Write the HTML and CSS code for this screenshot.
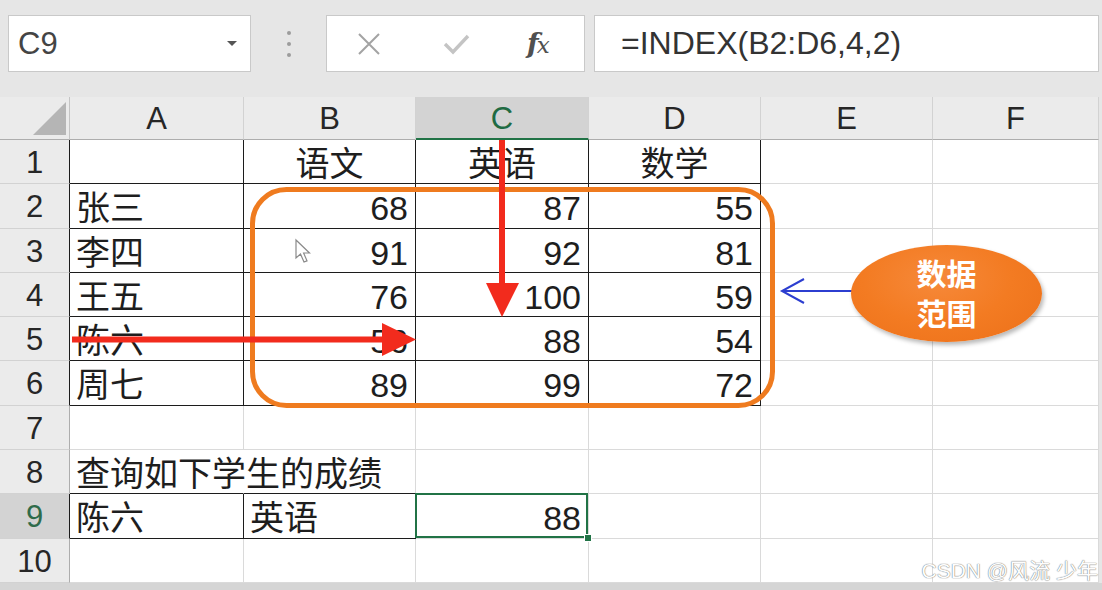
FILE: index.html
```html
<!DOCTYPE html>
<html lang="zh-CN">
<head>
<meta charset="utf-8">
<title>INDEX</title>
<link rel="stylesheet" href="styles.css">
</head>
<body>
<div class="toolbar">
  <div class="namebox"><span>C9</span><span class="caret"></span></div>
  <div class="dots"><i></i><i></i><i></i></div>
  <div class="btns">
    <svg class="ic-x" width="24" height="22" viewBox="0 0 24 22"><path d="M2 1 L22 21 M22 1 L2 21" stroke="#a3a3a3" stroke-width="2" fill="none"/></svg>
    <svg class="ic-ok" width="27" height="22" viewBox="0 0 27 22"><path d="M2 11 L10 19 L25 3" stroke="#c4c4c4" stroke-width="3.4" fill="none"/></svg>
    <span class="fx">f<span class="fxx">x</span></span>
  </div>
  <div class="formula">=INDEX(B2:D6,4,2)</div>
</div>

<div class="sheet">
  <div class="colh corner"><svg width="70" height="43" viewBox="0 0 70 43"><polygon points="66,5 66,38 33,38" fill="#b5b5b5"/></svg></div>
  <div class="colh">A</div><div class="colh">B</div><div class="colh sel">C</div><div class="colh">D</div><div class="colh">E</div><div class="colh">F</div>

  <div class="rowh rk">1</div>
  <div class="cell k"></div><div class="cell k c">语文</div><div class="cell k c">英语</div><div class="cell k c">数学</div><div class="cell"></div><div class="cell"></div>

  <div class="rowh rk">2</div>
  <div class="cell k">张三</div><div class="cell k n">68</div><div class="cell k n">87</div><div class="cell k n">55</div><div class="cell"></div><div class="cell"></div>

  <div class="rowh rk">3</div>
  <div class="cell k">李四</div><div class="cell k n">91</div><div class="cell k n">92</div><div class="cell k n">81</div><div class="cell"></div><div class="cell"></div>

  <div class="rowh rk">4</div>
  <div class="cell k">王五</div><div class="cell k n">76</div><div class="cell k n">100</div><div class="cell k n">59</div><div class="cell"></div><div class="cell"></div>

  <div class="rowh rk">5</div>
  <div class="cell k">陈六</div><div class="cell k n">56</div><div class="cell k n">88</div><div class="cell k n">54</div><div class="cell"></div><div class="cell"></div>

  <div class="rowh rk">6</div>
  <div class="cell k">周七</div><div class="cell k n">89</div><div class="cell k n">99</div><div class="cell k n">72</div><div class="cell"></div><div class="cell"></div>

  <div class="rowh">7</div>
  <div class="cell"></div><div class="cell"></div><div class="cell"></div><div class="cell"></div><div class="cell"></div><div class="cell"></div>

  <div class="rowh">8</div>
  <div class="cell kb nr">查询如下学生的成绩</div><div class="cell kb"></div><div class="cell"></div><div class="cell"></div><div class="cell"></div><div class="cell"></div>

  <div class="rowh rk rsel">9</div>
  <div class="cell k">陈六</div><div class="cell k">英语</div><div class="cell n active">88</div><div class="cell"></div><div class="cell"></div><div class="cell"></div>

  <div class="rowh">10</div>
  <div class="cell"></div><div class="cell"></div><div class="cell"></div><div class="cell"></div><div class="cell"></div><div class="cell"></div>
</div>
<div class="hbar"></div>

<svg class="marks" width="1102" height="590" viewBox="0 0 1102 590">
  <rect x="252.5" y="189.5" width="520" height="216" rx="34" ry="34" fill="none" stroke="#ef7b1f" stroke-width="5"/>
  <line x1="502" y1="140" x2="502" y2="286" stroke="#f22b1d" stroke-width="6"/>
  <polygon points="486,283 519,283 502,317" fill="#f22b1d"/>
  <line x1="72" y1="339.5" x2="385" y2="339.5" stroke="#f22b1d" stroke-width="6"/>
  <polygon points="382,323 382,356 416,339.5" fill="#f22b1d"/>
  <line x1="853" y1="291" x2="783" y2="291" stroke="#2c3ed0" stroke-width="2"/>
  <polyline points="804,279 782,291 804,303" fill="none" stroke="#2c3ed0" stroke-width="2"/>
  <path d="M296 240 L296 258 L300.5 254 L304 262 L307 260.8 L303.6 253 L309.5 253 Z" fill="#fff" stroke="#8a8a8a" stroke-width="1.2"/>
</svg>

<div class="bubble">数据<br>范围</div>
<div class="watermark">CSDN @风流 少年</div>
</body>
</html>
```

FILE: styles.css
```css
html, body {
  margin: 0;
  padding: 0;
}
body {
  width: 1102px;
  height: 590px;
  overflow: hidden;
  position: relative;
  background: #e6e6e6;
  font-family: "Liberation Sans", "Noto Sans CJK SC", sans-serif;
}

.toolbar {
  display: flex;
  align-items: flex-start;
  height: 97px;
  box-sizing: border-box;
  padding: 15px 0 0 8px;
}
.namebox {
  width: 243px;
  height: 57px;
  box-sizing: border-box;
  background: #fff;
  border: 1px solid #c9c9c9;
  display: flex;
  align-items: center;
  justify-content: space-between;
  padding: 0 13px 0 9px;
  font-size: 31px;
  color: #444;
}
.caret {
  width: 0;
  height: 0;
  border-left: 5px solid transparent;
  border-right: 5px solid transparent;
  border-top: 5px solid #555;
}
.dots {
  width: 75px;
  height: 57px;
  display: flex;
  flex-direction: column;
  align-items: center;
  justify-content: center;
  gap: 7px;
}
.dots i {
  display: block;
  width: 4px;
  height: 4px;
  border-radius: 50%;
  background: #9c9c9c;
}
.btns {
  width: 259px;
  height: 57px;
  box-sizing: border-box;
  background: #fff;
  border: 1px solid #c9c9c9;
  display: flex;
  align-items: center;
  padding-left: 30px;
}
.ic-ok {
  margin-left: 62px;
}
.fx {
  margin-left: 57px;
  font-family: "DejaVu Serif", "Liberation Serif", serif;
  font-style: italic;
  font-weight: bold;
  font-size: 27px;
  color: #505050;
  line-height: 1;
  letter-spacing: -2px;
}
.fxx {
  font-size: 23px;
  font-weight: normal;
}
.formula {
  margin-left: 9px;
  width: 505px;
  height: 57px;
  box-sizing: border-box;
  background: #fff;
  border: 1px solid #c9c9c9;
  padding-left: 26px;
  font-size: 32px;
  line-height: 55px;
  color: #333;
  white-space: nowrap;
}

.sheet {
  display: grid;
  grid-template-columns: 70px 174px 172px 173px 172px 172px 166px;
  grid-template-rows: 43px repeat(10, 44.3px);
  width: 1099px;
  background: #fff;
}
.colh {
  background: #ebebeb;
  border-right: 1px solid #d2d2d2;
  border-bottom: 1px solid #adadad;
  box-sizing: border-box;
  font-size: 31px;
  line-height: 43px;
  text-align: center;
  color: #262626;
}
.colh.corner {
  border-right-color: #c4c4c4;
}
.colh.corner svg {
  display: block;
}
.colh.sel {
  background: #d3d3d3;
  color: #1f6b43;
  border-bottom: 2px solid #217346;
}
.rowh {
  background: #ebebeb;
  border-right: 1px solid #adadad;
  border-bottom: 1px solid #d2d2d2;
  box-sizing: border-box;
  font-size: 31px;
  line-height: 44px;
  padding-top: 1px;
  text-align: center;
  color: #262626;
}
.rowh.rk {
  border-right-color: #1c1c1c;
}
.rowh.rsel {
  background: #d3d3d3;
  color: #2f6b4a;
}
.cell {
  border-right: 1px solid #dadada;
  border-bottom: 1px solid #dadada;
  box-sizing: border-box;
  font-size: 34px;
  line-height: 44px;
  padding: 2px 7px 0 6px;
  white-space: nowrap;
  color: #1e1e1e;
}
.cell.k {
  border-right-color: #1c1c1c;
  border-bottom-color: #1c1c1c;
}
.cell.kb {
  border-bottom-color: #1c1c1c;
}
.cell.nr {
  border-right-color: transparent;
}
.cell.n {
  text-align: right;
}
.cell.c {
  text-align: center;
  padding-left: 0;
  padding-right: 0;
}
.cell.active {
  position: relative;
  z-index: 2;
}
.cell.active::after {
  content: "";
  position: absolute;
  top: -1px;
  left: -1px;
  right: 0;
  bottom: 0;
  border: 2px solid #217346;
}
.cell.active::before {
  content: "";
  position: absolute;
  right: -4px;
  bottom: -4px;
  width: 6px;
  height: 6px;
  background: #217346;
  border: 1px solid #fff;
  z-index: 3;
}

.hbar {
  height: 7px;
  background: #d5d5d5;
}

.marks {
  position: absolute;
  left: 0;
  top: 0;
  pointer-events: none;
}
.bubble {
  position: absolute;
  left: 851px;
  top: 245px;
  width: 191px;
  height: 97px;
  border-radius: 50%;
  background: radial-gradient(ellipse at 45% 35%, #f6893a 0%, #f37b22 50%, #ec7019 100%);
  box-shadow: 2px 3px 4px rgba(0, 0, 0, 0.28);
  color: #fff;
  font-family: "Noto Sans CJK SC", sans-serif;
  font-weight: bold;
  font-size: 30px;
  line-height: 40px;
  text-align: center;
  box-sizing: border-box;
  padding-top: 7px;
}
.watermark {
  position: absolute;
  right: 4px;
  bottom: 9px;
  font-family: "Liberation Sans", "Noto Sans CJK SC", sans-serif;
  font-size: 21px;
  line-height: 21px;
  color: #fdfdfd;
  text-shadow: 0 0 1px #7a7a7a, 0 0 1px #7a7a7a;
  white-space: nowrap;
}
```
